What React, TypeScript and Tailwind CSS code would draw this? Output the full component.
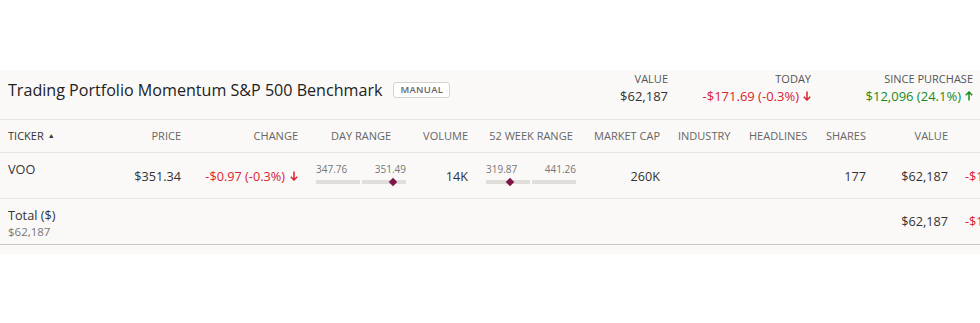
import React from "react";

const RED = "text-[#d9232e]";
const GREEN = "text-[#1a8a1a]";

const Arrow = ({ up, className }: { up?: boolean; className?: string }) => (
  <svg
    width="8"
    height="10"
    viewBox="0 0 8 10"
    className={className}
    style={{ transform: up ? "rotate(180deg)" : undefined }}
  >
    <path d="M4 0.5V9M0.8 5.8L4 9L7.2 5.8" fill="none" stroke="currentColor" strokeWidth="1.5" />
  </svg>
);

const Stat = ({ label, children }: { label: string; children: React.ReactNode }) => (
  <div className="flex flex-col items-end">
    <div className="text-[11px] leading-[14px] uppercase text-[#555]">{label}</div>
    <div className="text-[13px] leading-[18px] mt-[1px]">{children}</div>
  </div>
);

const Range = ({ lo, hi, pos }: { lo: string; hi: string; pos: number }) => (
  <div className="w-[90px]">
    <div className="flex justify-between text-[10px] leading-[14px] text-[#777]">
      <span>{lo}</span>
      <span>{hi}</span>
    </div>
    <div className="relative flex gap-[2px] mt-[4px]">
      <div className="h-[4px] flex-1 bg-[#e0dedb]" />
      <div className="h-[4px] flex-1 bg-[#e0dedb]" />
      <div
        className="absolute top-[-1.5px] w-[6px] h-[6px] bg-[#7b1747] rotate-45"
        style={{ left: pos - 3 }}
      />
    </div>
  </div>
);

const cols = [
  { key: "ticker", w: "w-[110px]", align: "justify-start pl-2" },
  { key: "price", w: "w-[79px]", align: "justify-end pr-2" },
  { key: "change", w: "w-[117px]", align: "justify-end pr-2" },
  { key: "day", w: "w-[110px]", align: "justify-center" },
  { key: "volume", w: "w-[60px]", align: "justify-end pr-2" },
  { key: "week", w: "w-[110px]", align: "justify-center" },
  { key: "cap", w: "w-[84px]", align: "justify-end pr-[10px]" },
  { key: "industry", w: "w-[70px]", align: "justify-start pl-2" },
  { key: "headlines", w: "w-[76px]", align: "justify-start pl-[9px]" },
  { key: "shares", w: "w-[58px]", align: "justify-end pr-2" },
  { key: "value", w: "w-[82px]", align: "justify-end pr-2" },
  { key: "gain", w: "w-[160px]", align: "justify-start pl-[9px]" },
];

export default function App() {
  const headers = [
    <span className="flex items-center gap-[4px] text-[#333]">
      TICKER <span className="text-[7px]">▲</span>
    </span>,
    "PRICE",
    "CHANGE",
    "DAY RANGE",
    "VOLUME",
    "52 WEEK RANGE",
    "MARKET CAP",
    "INDUSTRY",
    "HEADLINES",
    "SHARES",
    "VALUE",
    "",
  ];

  return (
    <div
      className="w-[980px] h-[323px] bg-white overflow-hidden text-[#333]"
      style={{ fontFamily: "'Open Sans', 'Noto Sans', sans-serif" }}
    >
      <div className="mt-[70px] bg-[#faf9f8] pb-[9px]">
        <div className="h-[50px] border-b border-[#e9e7e4] flex items-start pt-[2px] pr-[7px]">
          <div className="flex items-center mt-[6px] pl-2">
            <h1 className="text-[16.1px] leading-[24px] font-normal text-[#222]">
              Trading Portfolio Momentum S&amp;P 500 Benchmark
            </h1>
            <span className="ml-[11px] border border-[#d6d3cf] rounded-[3px] px-[6px] text-[9.5px] leading-[14px] font-semibold tracking-[0.3px] text-[#666] bg-white">
              MANUAL
            </span>
          </div>
          <div className="ml-auto flex">
            <div className="w-[80px] flex justify-end">
              <Stat label="Value">
                <span className="text-[#333]">$62,187</span>
              </Stat>
            </div>
            <div className="w-[143px] flex justify-end">
              <Stat label="Today">
                <span className={`${RED} flex items-center gap-[4px]`}>
                  -$171.69 (-0.3%) <Arrow />
                </span>
              </Stat>
            </div>
            <div className="w-[162px] flex justify-end">
              <Stat label="Since Purchase">
                <span className={`${GREEN} flex items-center gap-[4px]`}>
                  $12,096 (24.1%) <Arrow up />
                </span>
              </Stat>
            </div>
          </div>
        </div>

        <div className="w-[1300px]">
          <div className="flex h-[33px] border-b border-[#e9e7e4] text-[11px] text-[#666]">
            {cols.map((c, i) => (
              <div key={c.key} className={`${c.w} shrink-0 flex items-center ${c.align}`}>
                {headers[i]}
              </div>
            ))}
          </div>

          <div className="flex h-[46px] border-b border-[#e9e7e4] text-[12.7px] leading-[18px]">
            <div className="w-[110px] shrink-0 pl-2 pt-[7px]">VOO</div>
            <div className="w-[79px] shrink-0 pr-2 pt-[14px] text-right">$351.34</div>
            <div className={`w-[117px] shrink-0 pr-2 pt-[14px] flex justify-end items-start ${RED}`}>
              <span className="flex items-center gap-[5px]">
                -$0.97 (-0.3%) <Arrow />
              </span>
            </div>
            <div className="w-[110px] shrink-0 pt-[9px] flex justify-center">
              <Range lo="347.76" hi="351.49" pos={77} />
            </div>
            <div className="w-[60px] shrink-0 pr-2 pt-[14px] text-right">14K</div>
            <div className="w-[110px] shrink-0 pt-[9px] flex justify-center">
              <Range lo="319.87" hi="441.26" pos={24} />
            </div>
            <div className="w-[84px] shrink-0 pr-[10px] pt-[14px] text-right">260K</div>
            <div className="w-[70px] shrink-0" />
            <div className="w-[76px] shrink-0" />
            <div className="w-[58px] shrink-0 pr-2 pt-[14px] text-right">177</div>
            <div className="w-[82px] shrink-0 pr-2 pt-[14px] text-right">$62,187</div>
            <div className={`w-[160px] shrink-0 pl-[9px] pt-[14px] ${RED}`}>-$171.69 (-0.3%)</div>
          </div>

          <div className="flex h-[46px] border-b border-[#c9c7c4] text-[12.7px] leading-[18px]">
            <div className="w-[110px] shrink-0 pl-2 pt-[7px]">
              <div>Total ($)</div>
              <div className="text-[11.5px] leading-[16px] text-[#777]">$62,187</div>
            </div>
            <div className="w-[79px] shrink-0" />
            <div className="w-[117px] shrink-0" />
            <div className="w-[110px] shrink-0" />
            <div className="w-[60px] shrink-0" />
            <div className="w-[110px] shrink-0" />
            <div className="w-[84px] shrink-0" />
            <div className="w-[70px] shrink-0" />
            <div className="w-[76px] shrink-0" />
            <div className="w-[58px] shrink-0" />
            <div className="w-[82px] shrink-0 pr-2 pt-[13px] text-right">$62,187</div>
            <div className={`w-[160px] shrink-0 pl-[9px] pt-[13px] ${RED}`}>-$171.69 (-0.3%)</div>
          </div>
        </div>
      </div>
    </div>
  );
}
